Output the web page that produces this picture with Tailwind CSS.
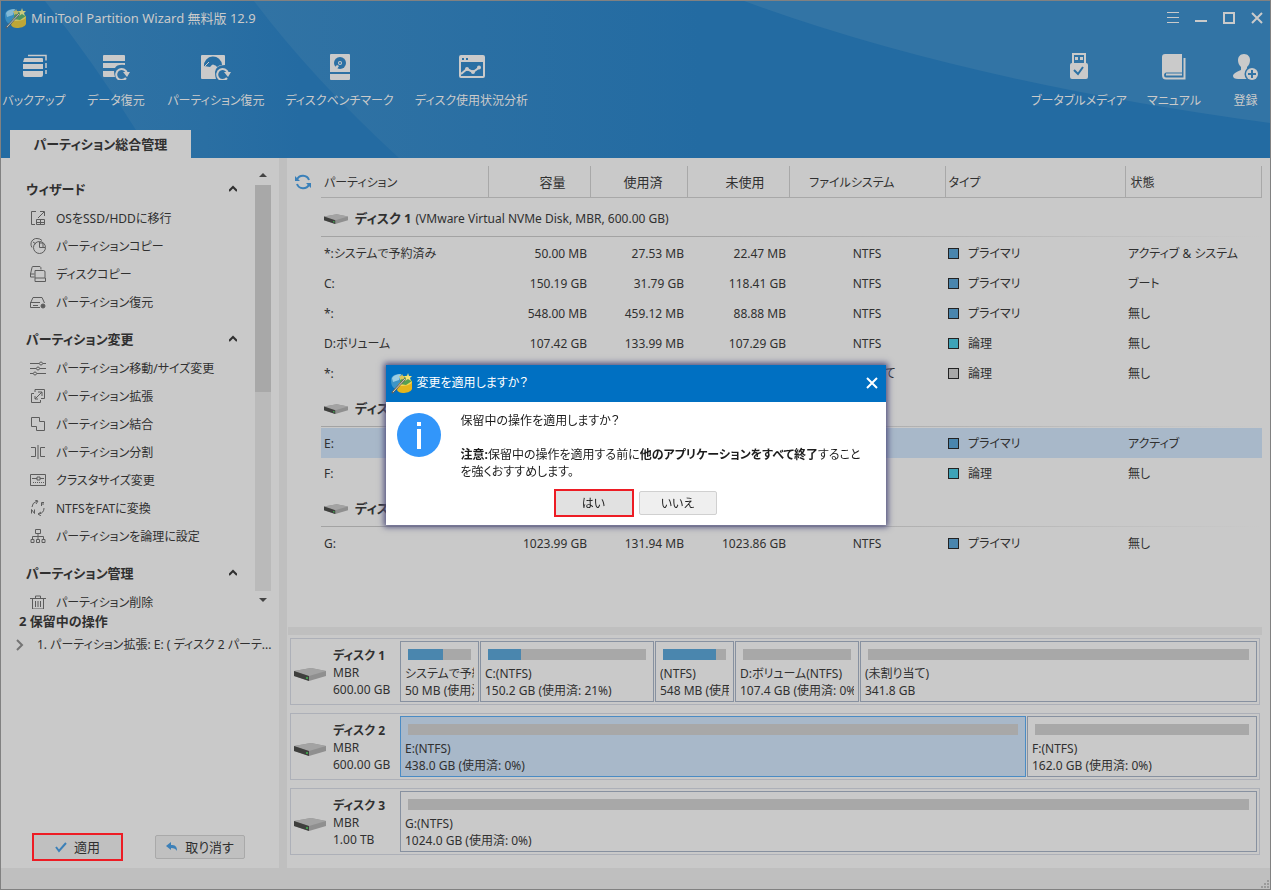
<!DOCTYPE html>
<html lang="ja">

<head>
    <meta charset="utf-8">
    <title>MiniTool Partition Wizard</title>
    <script src="https://cdn.jsdelivr.net/npm/@tailwindcss/browser@4"></script>
</head>

<body class="bg-[#c9c9c9] text-[#303030] text-[12px] leading-[17px] font-['Noto_Sans','Noto_Sans_CJK_JP',sans-serif] [font-feature-settings:'palt']">
    <!-- shared drawings -->
    <svg class="hidden">
        <symbol id="disk" viewBox="0 0 32 13">
            <path d="M0 3 17 0l15 3v5l-17 5L0 8z" fill="#8f8f8f"></path>
            <path d="M0 3 17 0l15 3-17 5z" fill="#a3a3a3"></path>
            <path d="m0 3 15 5v5L0 8z" fill="#3e3f3d"></path>
            <path d="M12 9h2v2h-2z" fill="#3f9a4c"></path>
        </symbol>
        <symbol id="logo" viewBox="0 0 22 22">
            <path d="M0 8c0-4 4-6 9-6l3 8-7 7c-4-1-5-5-5-9z" fill="#3e95c7"></path>
            <path d="M1 6c2-3 5-4 9-4l-2 6-6 2z" fill="#9bcde3"></path>
            <path d="m8 11 13-2v8c-1 3-6 4-9 4-3 0-5-1-6-3z" fill="#e5b51c"></path>
            <path d="m9 11 12-2c0 4-6 5-12 5z" fill="#f2d757"></path>
            <path d="m9 8 7-5 5 6-6 4-6-1z" fill="#58a052"></path>
            <path d="m17 1 1 3h3l-2 2 1 3-3-2-3 2 1-3-2-2h3z" fill="#f4e176"></path>
            <path d="m11 2 1 2h2l-1 2v2l-2-1-2 1V6L8 4h2z" fill="#dcc75b"></path>
            <path d="M1 21 14 7" stroke="#65615a" stroke-width="2"></path>
            <path d="M2 20 14 7" stroke="#d7d2c2"></path>
        </symbol>
    </svg>

    <div class="min-h-screen flex flex-col border border-[#818181]">
        <header class="relative h-[157px] flex flex-col bg-[#236ba2] text-[#cacaca] overflow-hidden">
            <svg class="absolute inset-0 w-full h-full" viewBox="0 0 1269 157" preserveAspectRatio="none">
                <defs>
                    <linearGradient id="g1" gradientUnits="userSpaceOnUse" x1="60" y1="0" x2="300" y2="0">
                        <stop offset="0" stop-color="#3173a4"></stop>
                        <stop offset=".6" stop-color="#2a6fa3"></stop>
                        <stop offset="1" stop-color="#246ba2"></stop>
                    </linearGradient>
                    <linearGradient id="g2" gradientUnits="userSpaceOnUse" x1="255" y1="0" x2="700" y2="0">
                        <stop offset="0" stop-color="#3173a4"></stop>
                        <stop offset="1" stop-color="#236ba2"></stop>
                    </linearGradient>
                </defs>
                <path d="M44 0Q92 60 135 129L152 157H500V0z" fill="url(#g1)"></path>
                <path d="M253 0Q312 78 398 157H720V0z" fill="url(#g2)"></path>
                <path d="M743 0Q960 80 1269 122V0z" fill="#3274a5"></path>
            </svg>
            <div class="relative flex items-center h-[34px] pl-1 pr-[7px]">
                <svg class="w-[22px] h-[22px] mr-1 opacity-80"><use href="#logo"></use></svg>
                <h1 class="flex-1 text-[13px]">MiniTool Partition Wizard 無料版 12.9</h1>
                <div class="flex items-center gap-4">
                    <button aria-label="メニュー"><svg class="w-3 h-3" viewBox="0 0 12 12" stroke="currentColor"><path d="M0 .5h12M0 5.5h12M0 10.5h12"></path></svg></button>
                    <button aria-label="最小化"><svg class="w-3 h-3" viewBox="0 0 12 12" stroke="currentColor" stroke-width="2"><path d="M0 9h12"></path></svg></button>
                    <button aria-label="最大化"><svg class="w-3 h-3" viewBox="0 0 12 12" fill="none" stroke="currentColor" stroke-width="2"><path d="M1 1h10v10H1z"></path></svg></button>
                    <button aria-label="閉じる"><svg class="w-3 h-3" viewBox="0 0 12 12" stroke="currentColor" stroke-width="2"><path d="m1 1 10 10M11 1 1 11"></path></svg></button>
                </div>
            </div>
            <nav class="relative flex justify-between pt-[17px] pl-[2px] pr-[11px] whitespace-nowrap">
                <div class="flex gap-5">
                    <button class="w-[62px] flex flex-col items-center gap-3">
                        <svg class="w-7 h-7" viewBox="0 0 28 28" fill="currentColor">
                            <path d="M4 7q0-1 1-1h17q1 0 1 1v3H3zM3 12h20v5H3zM3 19h20v4q0 2-2 2H5q-2 0-2-2z"></path>
                            <path d="M8 3.500h18v5M26 11v5M26 18v4" fill="none" stroke="currentColor" stroke-width="1.500"></path>
                        </svg>
                        <span>バックアップ</span>
                    </button>
                    <button class="w-[62px] flex flex-col items-center gap-3">
                        <svg class="w-7 h-7" viewBox="0 0 28 28" fill="currentColor">
                            <path d="M1 4q0-1 1-1h20q1 0 1 1v5H1zM1 11h22v2q-8-1-10 3H1zM1 19h11q0 3 1 6H2q-1 0-1-1z"></path>
                            <path d="M24 26a5.500 5.500 0 1 1 1-5" fill="none" stroke="currentColor" stroke-width="2"></path>
                            <path d="M21 20h7l-3 5z"></path>
                        </svg>
                        <span>データ復元</span>
                    </button>
                    <button class="w-[98px] flex flex-col items-center gap-3">
                        <svg class="w-[30px] h-7" viewBox="0 0 30 28">
                            <path d="M1 3h22q1 0 1 1v9q-9 0-10 7 0 4 1 7H1q-1 0-1-1V4q0-1 1-1z" fill="currentColor"></path>
                            <path d="M3 14a9 9 0 0 1 18-1q-3 0-5 2a4 4 0 0 0-7 0z" fill="#276ea3"></path>
                            <path d="m4 14 4-4" stroke="currentColor"></path>
                            <circle cx="12" cy="14" r="1.500" fill="currentColor"></circle>
                            <path d="M26 26a5.500 5.500 0 1 1 1-5" fill="none" stroke="currentColor" stroke-width="2"></path>
                            <path d="M23 20h7l-3 5z" fill="currentColor"></path>
                        </svg>
                        <span>パーティション復元</span>
                    </button>
                    <button class="w-[109px] flex flex-col items-center gap-3">
                        <svg class="w-5 h-7" viewBox="0 0 20 28">
                            <path d="M1 2h18q1 0 1 1v17H0V3q0-1 1-1zM0 22h20v5q0 1-1 1H1q-1 0-1-1z" fill="currentColor"></path>
                            <circle cx="10" cy="11" r="6" fill="#2b70a4"></circle>
                            <path d="m4 16 3-3 2 1-2 3H4z" fill="currentColor"></path>
                            <circle cx="10" cy="11" r="2" fill="currentColor"></circle>
                            <circle cx="10" cy="11" r="1" fill="#2b70a4"></circle>
                        </svg>
                        <span>ディスクベンチマーク</span>
                    </button>
                    <button class="w-[115px] flex flex-col items-center gap-3">
                        <svg class="w-[26px] h-7" viewBox="0 0 26 28" fill="none" stroke="currentColor" stroke-width="2">
                            <path d="M2 4h22q1 0 1 1v19q0 1-1 1H2q-1 0-1-1V5q0-1 1-1z"></path>
                            <path d="M1 7h24" stroke-width="6"></path>
                            <path d="M3 7h2M7 7h2" stroke="#2a6fa3"></path>
                            <path d="m2 22 6-5 6 3 7-5"></path>
                            <circle cx="8" cy="17" r="1"></circle><circle cx="14" cy="20" r="1"></circle><circle cx="20" cy="15.500" r="1"></circle>
                        </svg>
                        <span>ディスク使用状況分析</span>
                    </button>
                </div>
                <div class="flex">
                    <button class="w-[96px] mr-5 flex flex-col items-center gap-3">
                        <svg class="w-[18px] h-7" viewBox="0 0 18 28">
                            <path d="M3 12V2h12v10" fill="none" stroke="currentColor" stroke-width="2"></path>
                            <path d="M5 5h3v3H5zM10 5h3v3h-3zM0 13q0-2 2-2h14q2 0 2 2v12q0 2-2 2H2q-2 0-2-2z" fill="currentColor"></path>
                            <path d="m4 18 4 4 5-7" fill="none" stroke="#2c71a4" stroke-width="2"></path>
                        </svg>
                        <span>ブータブルメディア</span>
                    </button>
                    <button class="w-[54px] mr-[31px] flex flex-col items-center gap-3">
                        <svg class="w-6 h-7" viewBox="0 0 24 28">
                            <path d="M3 2h17v17H5q-3 1-3 4H0V5q0-3 3-3z" fill="currentColor"></path>
                            <path d="M20 19.500H4q-3 0-3 3.500t3 3.500h18.500V6" fill="none" stroke="currentColor" stroke-width="2"></path>
                            <path d="M4 22.500h16" stroke="currentColor" stroke-width="2"></path>
                        </svg>
                        <span>マニュアル</span>
                    </button>
                    <button class="w-[27px] flex flex-col items-center gap-3">
                        <svg class="w-[26px] h-7" viewBox="0 0 26 28">
                            <path d="M11 2c4 0 6 3 6 6s-1 5-3 7v3l5 2v7H5c-3 0-5-1-5-3s3-4 8-6v-3C6 13 5 11 5 8s2-6 6-6z" fill="currentColor"></path>
                            <circle cx="19" cy="22" r="7.500" fill="#3274a5"></circle>
                            <circle cx="19" cy="22" r="6" fill="currentColor"></circle>
                            <path d="M15 22h8M19 18v8" stroke="#3274a5" stroke-width="2"></path>
                        </svg>
                        <span>登録</span>
                    </button>
                </div>
            </nav>
            <div class="relative mt-auto ml-[9px] w-[181px] h-7 bg-[#c9c9c9] text-[#303030] text-[13px] font-bold flex items-center justify-center">パーティション総合管理</div>
        </header>

        <div class="flex-1 flex">
            <aside class="w-[278px] shrink-0 flex flex-col pt-2">
                <div class="flex h-[443px] overflow-hidden">
                    <div id="menu" class="flex-1 pt-[6px]"></div>
                    <!-- scrollbar -->
                    <div class="w-4 mr-2 flex flex-col">
                        <svg class="w-4 h-[19px]" viewBox="0 0 16 19"><path d="M4 11h8L8 7z" fill="#444"></path></svg>
                        <div class="h-[207px] bg-[#a8a8a8]"></div>
                        <div class="h-[199px] bg-[#bababa]"></div>
                        <svg class="w-4 h-[18px]" viewBox="0 0 16 18"><path d="M4 7h8l-4 4z" fill="#444"></path></svg>
                    </div>
                </div>
                <h2 class="pl-[18px] pt-1 text-[13px] font-bold">2 保留中の操作</h2>
                <div class="flex items-center pl-[15px] pt-[6px]">
                    <svg class="w-2 h-3 mr-[13px]" viewBox="0 0 8 12" fill="none" stroke="#747474" stroke-width="2"><path d="m1 1 5 5-5 5"></path></svg>
                    <span class="whitespace-nowrap">1. パーティション拡張: E: ( ディスク 2 パーテ...</span>
                </div>
                <div class="mt-auto flex items-center gap-8 pl-[31px] pb-[7px] text-[13px]">
                    <button class="w-[91px] h-7 flex items-center justify-center gap-[7px] border-2 border-[#ed1c24] bg-[#c0c0c0]">
                        <svg class="w-3 h-3" viewBox="0 0 12 12" fill="none" stroke="#3c80b8" stroke-width="2"><path d="m1 6 3 4 7-8"></path></svg>
                        適用
                    </button>
                    <button class="w-[90px] h-6 flex items-center justify-center gap-[7px] border border-[#a9a9a9] rounded-xs bg-[#c0c0c0]">
                        <svg class="w-3 h-3" viewBox="0 0 12 12"><path d="M5 1v3c4 0 6 1 6 6-1-2-3-3-6-3v2L0 5z" fill="#3c80b8"></path></svg>
                        取り消す
                    </button>
                </div>
            </aside>
            <div class="w-2 bg-[#bfbfbf]"></div>

            <main class="flex-1 min-w-0 flex flex-col pl-[1px] pt-2 pr-2">
                <div class="flex h-[461px]">
                    <button aria-label="更新" class="w-[33px] h-8 pr-[3px] flex items-center justify-center">
                        <svg class="w-4 h-4" viewBox="0 0 16 16" fill="none" stroke="#3a80b9" stroke-width="2">
                            <path d="M2 5.500A6.500 6.500 0 0 1 14 6M14 10.500A6.500 6.500 0 0 1 2 10"></path>
                            <path d="M0 2v5h5zM16 14V9h-5z" fill="#3a80b9" stroke="none"></path>
                        </svg>
                    </button>
                    <div class="flex-1">
                        <table class="w-full table-fixed">
                            <thead>
                                <tr class="h-[31px] border-b border-[#a8a8a8]">
                                    <th class="w-[167px] pl-[3px] pt-[2px] text-left font-normal border-r border-[#a8a8a8]">パーティション</th>
                                    <th class="w-[102px] pr-6 pt-[2px] text-[13px] text-right font-normal border-r border-[#a8a8a8]">容量</th>
                                    <th class="w-[97px] pr-6 pt-[2px] text-[13px] text-right font-normal border-r border-[#a8a8a8]">使用済</th>
                                    <th class="w-[102px] pr-6 pt-[2px] text-[13px] text-right font-normal border-r border-[#a8a8a8]">未使用</th>
                                    <th class="w-[156px] pr-[50px] pt-[2px] text-right font-normal border-r border-[#a8a8a8]">ファイルシステム</th>
                                    <th class="w-[180px] pl-[3px] pt-[2px] text-left font-normal border-r border-[#a8a8a8]">タイプ</th>
                                    <th class="pl-[5px] pt-[2px] text-left font-normal border-r border-[#a8a8a8]">状態</th>
                                </tr>
                            </thead>
                            <tbody id="rows"></tbody>
                        </table>
                    </div>
                </div>
                <div class="h-2 bg-[#bfbfbf]"></div>
                <div id="disks" class="flex flex-col gap-2 pt-[3px] pl-[2px] pr-[2px]"></div>
            </main>
        </div>

        <footer class="h-[21px] flex items-end justify-end bg-[#bfbfbf]">
            <svg class="w-2 h-2 m-[1px]" viewBox="0 0 8 8" fill="#9a9a9a"><path d="M6 0h2v2H6zM3 3h2v2H3zM6 3h2v2H6zM0 6h2v2H0zM3 6h2v2H3zM6 6h2v2H6z"></path></svg>
        </footer>
    </div>

    <div class="fixed inset-0 flex items-center justify-center">
        <div role="dialog" aria-labelledby="dialog-title" class="w-[500px] bg-white text-[#1c1c1c] shadow-[0_0_6px_2px_#50507e]">
            <div class="h-[37px] flex items-center pl-[5px] pr-2 pb-[2px] bg-[#0070c2] text-white">
                <svg class="w-[22px] h-[22px] mr-1"><use href="#logo"></use></svg>
                <h2 id="dialog-title" class="flex-1">変更を適用しますか？</h2>
                <button aria-label="閉じる"><svg class="w-3 h-3" viewBox="0 0 12 12" stroke="currentColor" stroke-width="2"><path d="m1 1 10 10M11 1 1 11"></path></svg></button>
            </div>
            <div class="flex gap-5 pt-[10px] pl-[11px]">
                <svg class="w-11 h-11 mt-[1px] shrink-0" viewBox="0 0 44 44">
                    <circle cx="22" cy="22" r="22" fill="#3296fa"></circle>
                    <path d="M20 9h4v4h-4zM20 16h4v20h-4z" fill="#fff"></path>
                </svg>
                <p class="whitespace-nowrap">保留中の操作を適用しますか？<br><br><b>注意:</b>保留中の操作を適用する前に<b>他のアプリケーションをすべて終了</b>すること<br>を強くおすすめします。</p>
            </div>
            <div class="flex items-center gap-[5px] pt-[9px] pb-2 pl-[168px]">
                <button class="w-20 h-7 border-2 border-[#ed1c24] bg-[#e1e1e1]">はい</button>
                <button class="w-[78px] h-6 border border-[#d0d0d0] rounded-xs bg-[#efefef]">いいえ</button>
            </div>
        </div>
    </div>

    <script>
        const menu = [
            ["ウィザード", [
                ["OSをSSD/HDDに移行", '<path d="M6 1.500H1.500v13H5M10 1.500h4.500V6M14 2 8 8M6.500 9.500h8v5h-8zM10.500 9v6M6 12.500h9"/>'],
                ["パーティションコピー", '<circle cx="9.500" cy="9.500" r="6"/><path d="M9.500 9.500V4M9.500 9.500H15M10 5h3v4M2 9.500C-1 5 3 0 7 .500q3 0 5 2M3 4l3 2"/>'],
                ["ディスクコピー", '<path d="M5 4.500V12h10V6q0-1.500-1.500-1.500zM5 12v3.500h10.500V12M4.500 11H.500V8L2 1.500q0-1 1-1h7q1 0 1 3M.500 8h4"/>'],
                ["パーティション復元", '<path d="M.500 9 3 3.500h9L14.500 9M10 8.500H.500v5H10M3 11.500h5"/><circle cx="13" cy="12" r="2" fill="#5c5c5c"/>'],
            ]],
            ["パーティション変更", [
                ["パーティション移動/サイズ変更", '<path d="M0 3.500h9M13 3.500h3M0 8.500h6M10 8.500h6M0 13.500h3M7 13.500h9"/><circle cx="11" cy="3.500" r="1.500"/><circle cx="8" cy="8.500" r="1.500"/><circle cx="5" cy="13.500" r="1.500"/>'],
                ["パーティション拡張", '<path d="M5 4V1.500h9.500v9H11M4 5.500H1.500v9h9V12M5 11l7-7M8 4h4v4M5 8v3h3"/>'],
                ["パーティション結合", '<path d="M1.500 1.500h8v4h5v9h-8v-4h-5z"/>'],
                ["パーティション分割", '<path d="M1 3.500h4.500v9H1M8 1v14M15 3.500h-4.500v9H15"/>'],
                ["クラスタサイズ変更", '<path d="M.500 2.500h15v11H.500zM2 6.500h5M10 6.500h4M7 5h3v3H7z"/><path d="M3 10.500h11" stroke-dasharray="1 1"/>'],
                ["NTFSをFATに変換", '<path d="M2 7q0-4 5-6M5 0l3 1-2 3M14 8q0 5-5 6M11 12l-3 2 3 2M11.500 6V2.500H14M11.500 4H14M1.500 13.500v-4l3 4v-4"/>'],
                ["パーティションを論理に設定", '<path d="M5.500 1.500h5v4h-5zM8 6v2.500M2.500 11V8.500h11V11M8 8v3M1 11.500h3v3H1zM6.500 11.500h3v3h-3zM12 11.500h3v3h-3z"/>'],
            ]],
            ["パーティション管理", [
                ["パーティション削除", '<path d="M0 4.500h16M5.500 4V2h5v2M2.500 5v10h11V5M5.500 7v6M8 7v6M10.500 7v6"/>'],
            ]],
        ];

        document.getElementById("menu").innerHTML = menu.map(([title, items]) => `
            <section class="pb-[6px]">
                <div class="flex items-center justify-between h-8 pt-[2px] pl-[25px] pr-[18px]">
                    <h2 class="text-[13px] font-bold">${title}</h2>
                    <svg class="w-2 h-2" viewBox="0 0 8 8" fill="none" stroke="#303030" stroke-width="2"><path d="m0 6 4-4 4 4"/></svg>
                </div>
                ${items.map(([label, icon]) => `
                <a href="#" class="flex items-center gap-[10px] h-7 pl-[29px]">
                    <svg class="w-4 h-4" viewBox="0 0 16 16" fill="none" stroke="#5c5c5c">${icon}</svg>
                    <span class="whitespace-nowrap">${label}</span>
                </a>`).join("")}
            </section>`).join("");

        const primary = "bg-[#4a86ae]";
        const logical = "bg-[#3ea3b8]";
        const rows = [
            { disk: "ディスク 1", info: "(VMware Virtual NVMe Disk, MBR, 600.00 GB)" },
            { cells: ["*:システムで予約済み", "50.00 MB", "27.53 MB", "22.47 MB", "NTFS", "プライマリ", "アクティブ & システム"], color: primary },
            { cells: ["C:", "150.19 GB", "31.79 GB", "118.41 GB", "NTFS", "プライマリ", "ブート"], color: primary },
            { cells: ["*:", "548.00 MB", "459.12 MB", "88.88 MB", "NTFS", "プライマリ", "無し"], color: primary },
            { cells: ["D:ボリューム", "107.42 GB", "133.99 MB", "107.29 GB", "NTFS", "論理", "無し"], color: logical },
            { cells: ["*:", "", "", "", "未割り当て", "論理", "無し"], color: "bg-[#a8a8a8]" },
            { disk: "ディスク 2", info: "" },
            { cells: ["E:", "", "", "", "", "プライマリ", "アクティブ"], color: primary, selected: true },
            { cells: ["F:", "", "", "", "", "論理", "無し"], color: logical },
            { disk: "ディスク 3", info: "" },
            { cells: ["G:", "1023.99 GB", "131.94 MB", "1023.86 GB", "NTFS", "プライマリ", "無し"], color: primary },
        ];

        document.getElementById("rows").innerHTML = rows.map(r => {
            if (r.disk) {
                return `
                <tr class="h-10"><td colspan="7">
                    <div class="flex items-center h-[38px] pt-1 pl-[3px]">
                        <svg class="w-6 h-[10px] mr-[7px]"><use href="#disk"/></svg>
                        <b class="mr-1 text-[13px]">${r.disk}</b>${r.info}
                    </div>
                    <div class="h-px mb-[1px] bg-linear-to-r from-[#a3a3a3] from-40% to-[#c9c9c9]"></div>
                </td></tr>`;
            }
            const [name, size, used, free, fs, type, status] = r.cells;
            return `
                <tr class="h-[30px] ${r.selected ? "bg-[#a8b8c9]" : ""}">
                    <td class="pl-[3px] pt-[2px]">${name}</td>
                    <td class="pr-[3px] pt-[2px] text-right">${size}</td>
                    <td class="pr-[3px] pt-[2px] text-right">${used}</td>
                    <td class="pr-[3px] pt-[2px] text-right">${free}</td>
                    <td class="pt-[2px] text-center">${fs}</td>
                    <td class="pl-[3px] pt-[2px]"><div class="flex items-center gap-[9px]"><span class="w-[11px] h-[11px] border border-[#222] ${r.color}"></span>${type}</div></td>
                    <td class="pl-[3px] pt-[2px]">${status}</td>
                </tr>`;
        }).join("");

        // width: share of the disk, used: filled part of the bar in percent
        const disks = [
            {
                name: "ディスク 1", size: "600.00 GB", parts: [
                    { width: 79, used: 56, label: "システムで予約済み", info: "50 MB (使用済: 55%)" },
                    { width: 174, used: 21, label: "C:(NTFS)", info: "150.2 GB (使用済: 21%)" },
                    { width: 79, used: 84, label: "(NTFS)", info: "548 MB (使用済: 83%)" },
                    { width: 124, used: 0, label: "D:ボリューム(NTFS)", info: "107.4 GB (使用済: 0%)" },
                    { width: 397, used: 0, label: "(未割り当て)", info: "341.8 GB" },
                ]
            },
            {
                name: "ディスク 2", size: "600.00 GB", parts: [
                    { width: 626, used: 0, label: "E:(NTFS)", info: "438.0 GB (使用済: 0%)", selected: true },
                    { width: 230, used: 0, label: "F:(NTFS)", info: "162.0 GB (使用済: 0%)" },
                ]
            },
            {
                name: "ディスク 3", size: "1.00 TB", parts: [
                    { width: 1, used: 0, label: "G:(NTFS)", info: "1024.0 GB (使用済: 0%)" },
                ]
            },
        ];

        document.getElementById("disks").innerHTML = disks.map(d => `
            <section class="flex h-[67px] p-[2px] border border-[#adb0b8]">
                <div class="w-[107px] shrink-0 flex items-center gap-[7px] pl-[1px] pt-[5px]">
                    <svg class="w-8 h-[13px] shrink-0"><use href="#disk"/></svg>
                    <div class="pb-[3px] whitespace-nowrap"><b class="block">${d.name}</b>MBR<br>${d.size}</div>
                </div>
                <div class="flex-1 grid gap-[1px]" style="grid-template-columns: ${d.parts.map(p => `minmax(0, ${p.width}fr)`).join(" ")}">
                    ${d.parts.map(p => `
                    <div class="pt-[7px] pl-1 pr-1 border whitespace-nowrap ${p.selected ? "border-[#4a8bc4] bg-[#a8b8c9]" : "border-[#8791a0]"}">
                        <div class="h-[11px] mx-[3px] mb-[5px] bg-[#a8a8a8]"><div class="h-full bg-[#4a86ae]" style="width: ${p.used}%"></div></div>
                        <div class="overflow-hidden">${p.label}<br>${p.info}</div>
                    </div>`).join("")}
                </div>
            </section>`).join("");
    </script>
</body>

</html>
